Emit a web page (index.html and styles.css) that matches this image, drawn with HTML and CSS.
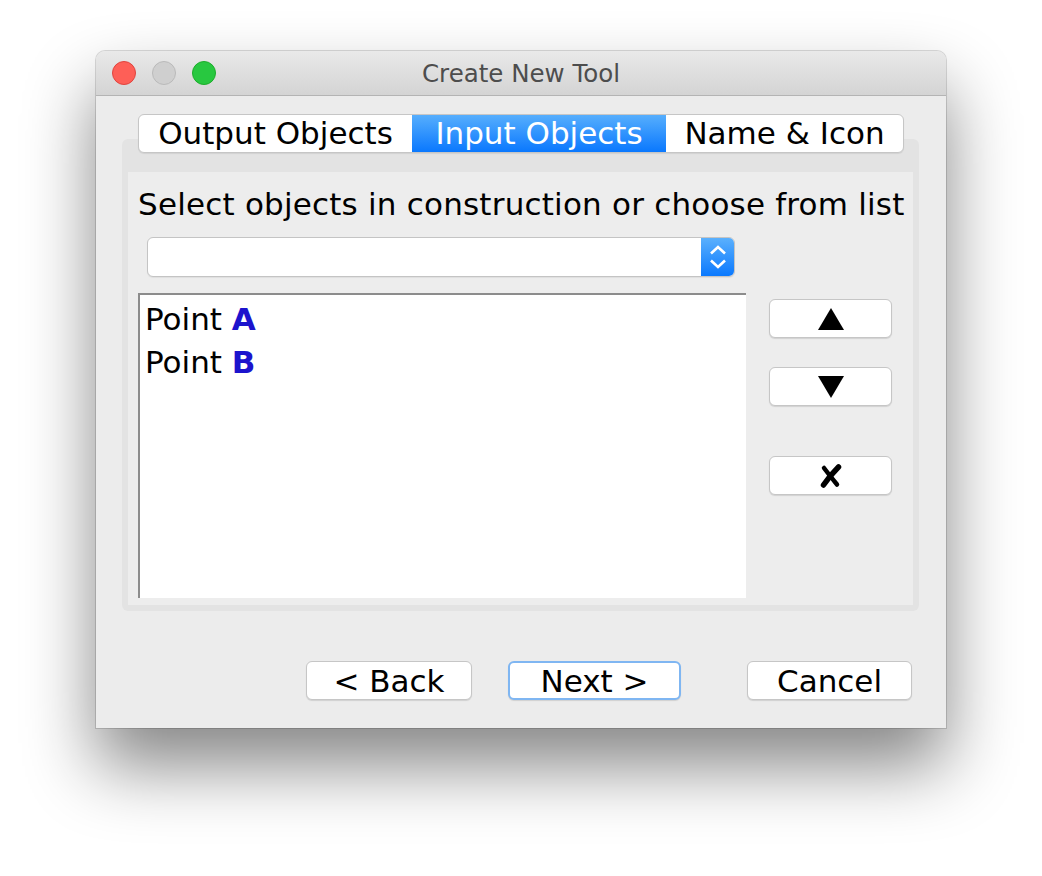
FILE: index.html
```html
<!DOCTYPE html>
<html>
  <head>
    <title>Create New Tool</title>
    <link rel="stylesheet" href="styles.css">
  </head>
  <body>
    <div class="stage">
      <div class="window">
        <div class="titlebar">
          <div class="lights">
            <span class="light close"></span>
            <span class="light min"></span>
            <span class="light zoom"></span>
          </div>
          <div class="title">Create New Tool</div>
        </div>
        <div class="content">
          <div class="tabs">
            <div class="tab tab-output">Output Objects</div>
            <div class="tab tab-input selected">Input Objects</div>
            <div class="tab tab-name">Name &amp; Icon</div>
          </div>
          <div class="panel">
            <div class="inner">
              <div class="hint">Select objects in construction or choose from list</div>
              <div class="combo">
                <div class="combo-field"></div>
                <div class="combo-arrows">
                  <svg width="18" height="28" viewBox="0 0 18 28">
                    <path d="M2 10.5 L9 4 L16 10.5" fill="none" stroke="#fff" stroke-width="2.6"/>
                    <path d="M2 17.5 L9 24 L16 17.5" fill="none" stroke="#fff" stroke-width="2.6"/>
                  </svg>
                </div>
              </div>
              <div class="list-row">
                <div class="list">
                  <div class="item">Point <b>A</b></div>
                  <div class="item">Point <b>B</b></div>
                </div>
                <div class="side-buttons">
                  <button class="btn side up">
                    <svg width="26" height="22" viewBox="0 0 26 22"><polygon points="13,0 26,22 0,22" fill="#000"/></svg>
                  </button>
                  <button class="btn side down">
                    <svg width="26" height="22" viewBox="0 0 26 22"><polygon points="0,0 26,0 13,22" fill="#000"/></svg>
                  </button>
                  <button class="btn side remove">
                    <svg width="22" height="24" viewBox="0 0 22 24">
                      <path d="M4 4 Q10 12 17 20.5" fill="none" stroke="#000" stroke-width="4.5" stroke-linecap="round"/>
                      <path d="M18.5 3 Q10 11.5 3.5 21" fill="none" stroke="#000" stroke-width="5.5" stroke-linecap="round"/>
                    </svg>
                  </button>
                </div>
              </div>
            </div>
          </div>
          <div class="footer">
            <button class="btn back">&lt; Back</button>
            <button class="btn next">Next &gt;</button>
            <button class="btn cancel">Cancel</button>
          </div>
        </div>
      </div>
    </div>
  </body>
</html>
```

FILE: styles.css
```css
body{
    margin: 0;
    background: #fff;
    font-family: "DejaVu Sans", "Liberation Sans", sans-serif;
    color: #000;
}
.stage{
    padding: 51px 0 0 96px;
    height: 876px;
    box-sizing: border-box;
    overflow: hidden;
}
.window{
    width: 850px;
    height: 677px;
    background: #ececec;
    border-radius: 9px 9px 0 0;
    box-shadow: 0 0 0 1px rgba(0,0,0,0.14), 0 38px 70px rgba(0,0,0,0.48);
    display: flex;
    flex-direction: column;
}

/* title bar */
.titlebar{
    height: 44px;
    border-bottom: 1px solid #b4b4b4;
    border-radius: 9px 9px 0 0;
    background: linear-gradient(#e9e9e9, #d4d4d4);
    display: flex;
    align-items: center;
    position: relative;
}
.lights{
    display: flex;
    gap: 16px;
    padding-left: 16px;
}
.light{
    width: 22px;
    height: 22px;
    border-radius: 50%;
    border: 1px solid;
}
.light.close{ background: #fe5f57; border-color: #e0443e; }
.light.min{ background: #cfcfcf; border-color: #bababa; }
.light.zoom{ background: #28c840; border-color: #1dad2b; }
.title{
    position: absolute;
    left: 0;
    right: 0;
    top: 8px;
    text-align: center;
    font-size: 24.5px;
    color: #4d4d4d;
}

/* content */
.content{
    flex: 1;
    padding: 18px 27px 0 26px;
    display: flex;
    flex-direction: column;
}
.tabs{
    display: flex;
    margin-left: 16px;
    height: 39px;
    position: relative;
    z-index: 1;
    align-self: flex-start;
    border: 1px solid #c6c6c6;
    border-radius: 6px;
    background: #fff;
    box-shadow: 0 1px 1px rgba(0,0,0,0.08);
    box-sizing: border-box;
    overflow: hidden;
}
.tab{
    font-size: 31px;
    line-height: 37px;
    text-align: center;
}
.tab-output{ width: 273px; }
.tab-input{ width: 254px; }
.tab-name{ width: 237px; }
.tab.selected{
    background: linear-gradient(#56aefd, #0a78fe);
    color: #fff;
}
.panel{
    margin-top: -14px;
    height: 472px;
    box-sizing: border-box;
    background: #e3e3e3;
    border-radius: 6px;
    padding: 33px 6px 6px 6px;
}
.inner{
    background: #ededed;
    height: 100%;
    box-sizing: border-box;
    padding: 14px 0 0 10px;
}
.hint{
    font-size: 31px;
    letter-spacing: 0.2px;
    line-height: 36px;
}
.combo{
    margin: 15px 0 0 9px;
    width: 588px;
    height: 40px;
    box-sizing: border-box;
    border: 1px solid #c4c4c4;
    border-radius: 6px;
    background: #fff;
    display: flex;
    overflow: hidden;
    box-shadow: 0 1px 1px rgba(0,0,0,0.06);
}
.combo-field{
    flex: 1;
}
.combo-arrows{
    width: 33px;
    background: linear-gradient(#5ab0fd, #0b79fe);
    display: flex;
    align-items: center;
    justify-content: center;
}
.list-row{
    margin-top: 16px;
    display: flex;
    align-items: flex-start;
}
.list{
    width: 608px;
    height: 305px;
    box-sizing: border-box;
    background: #fff;
    border-top: 2px solid #8c8c8c;
    border-left: 2px solid #8c8c8c;
    padding: 3px 0 0 5px;
}
.item{
    font-size: 31px;
    line-height: 43px;
}
.item b{
    color: #1c13cd;
}
.side-buttons{
    margin: 6px 0 0 23px;
    display: flex;
    flex-direction: column;
}

/* buttons */
.btn{
    font-family: inherit;
    font-size: 31px;
    height: 39px;
    padding: 0;
    background: #fff;
    border: 1px solid #c6c6c6;
    border-radius: 6px;
    box-shadow: 0 1px 1px rgba(0,0,0,0.12);
    color: #000;
    display: flex;
    align-items: center;
    justify-content: center;
}
.btn.side{
    width: 123px;
}
.btn.down{
    margin-top: 29px;
}
.btn.remove{
    margin-top: 50px;
}
.footer{
    margin-top: 50px;
    display: flex;
    justify-content: flex-end;
    padding-right: 7px;
}
.btn.back{ width: 166px; }
.btn.next{
    width: 173px;
    margin-left: 36px;
    border: 2px solid #7fb6f2;
}
.btn.cancel{
    width: 165px;
    margin-left: 66px;
}
```
